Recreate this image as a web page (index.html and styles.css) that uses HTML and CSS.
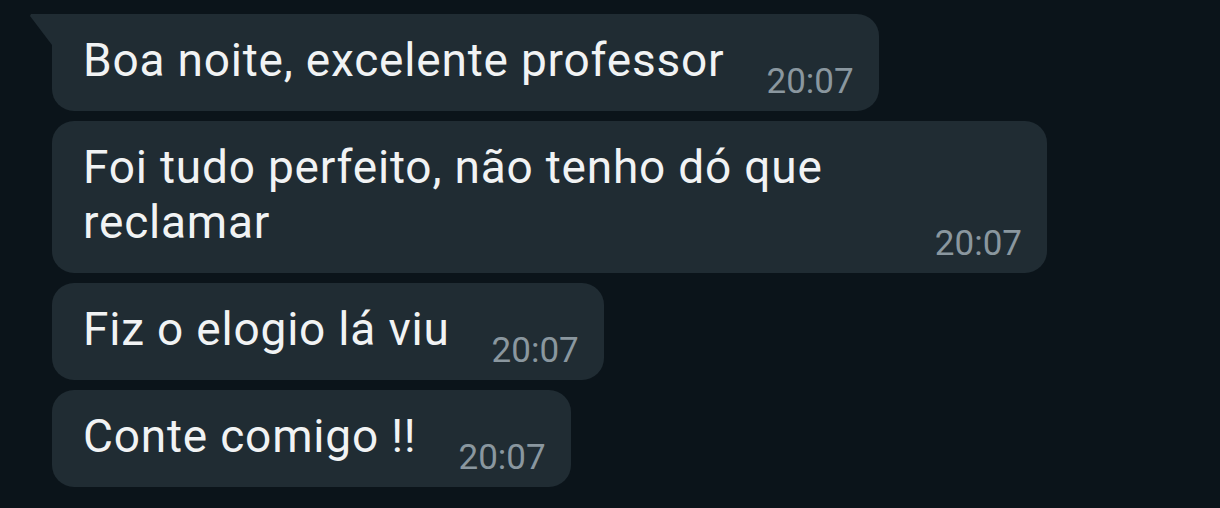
FILE: index.html
```html
<!DOCTYPE html>
<html lang="pt">
<head>
<meta charset="utf-8">
<title>Chat</title>
<link rel="stylesheet" href="styles.css">
</head>
<body>
<div class="chat">
  <div class="bubble first">
    <div class="text">Boa noite, excelente professor</div>
    <div class="time">20:07</div>
  </div>
  <div class="bubble wide">
    <div class="text">Foi tudo perfeito, não tenho dó que reclamar</div>
    <div class="time">20:07</div>
  </div>
  <div class="bubble">
    <div class="text">Fiz o elogio lá viu</div>
    <div class="time">20:07</div>
  </div>
  <div class="bubble">
    <div class="text">Conte comigo !!</div>
    <div class="time">20:07</div>
  </div>
</div>
</body>
</html>
```
FILE: styles.css
```css
html, body {
  margin: 0;
  padding: 0;
  background: #0b141a;
  width: 1220px;
  height: 508px;
  overflow: hidden;
}

.chat {
  display: flex;
  flex-direction: column;
  align-items: flex-start;
  gap: 10px;
  padding: 14px 0 0 52px;
  font-family: Roboto, "Noto Sans", sans-serif;
}

.bubble {
  position: relative;
  display: flex;
  align-items: flex-start;
  gap: 42px;
  max-width: 995px;
  box-sizing: border-box;
  padding: 19px 25px 12px 31px;
  background: #202c33;
  border-radius: 22px;
}

.bubble.first {
  border-top-left-radius: 0;
}

.bubble.first::before {
  content: "";
  position: absolute;
  left: -22px;
  top: 0;
  width: 22px;
  height: 31px;
  background: #202c33;
  clip-path: polygon(0 2px, 1px 0, 100% 0, 100% 100%);
}

.text {
  flex: 0 1 auto;
  color: #f1f3f4;
  font-size: 46px;
  letter-spacing: 0.8px;
  line-height: 55px;
  margin-bottom: 11px;
}

.time {
  flex: 0 0 auto;
  align-self: flex-end;
  color: #8a979f;
  font-size: 35px;
  line-height: 35px;
}
```
